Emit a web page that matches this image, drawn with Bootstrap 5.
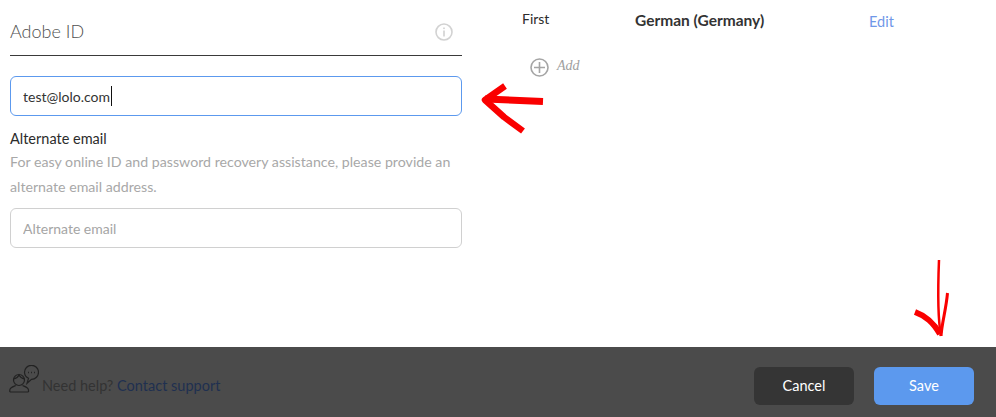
<!DOCTYPE html>
<html lang="en">
<head>
    <meta charset="UTF-8">
    <meta name="viewport" content="width=device-width, initial-scale=1.0">
    <link href="https://cdn.jsdelivr.net/npm/bootstrap@5.3.3/dist/css/bootstrap.min.css" rel="stylesheet">
    <script src="https://cdn.jsdelivr.net/npm/bootstrap@5.3.3/dist/js/bootstrap.bundle.min.js"></script>
    <title>Adobe ID</title>
    <style>
        html, body { height: 417px; overflow: hidden; }
        body { font-family: "Lato", "Liberation Sans", sans-serif; font-size: 14px; color: #2c2c2c; position: relative; }
        .page-main { height: 347px; padding-left: 10px; }
        .left-side { width: 452px; }
        .id-head { height: 56px; padding-top: 18px; border-bottom: 1px solid #3a3a3a; font-size: 18px; font-weight: 300; color: #505050; line-height: 26px; margin-bottom: 20px; }
        .info-icon { margin-top: 5px; margin-right: 9px; }
        .field-box { height: 40px; border-radius: 6px; padding: 0 12px; font-size: 14px; color: #333; border: 1px solid #d0d0d0; }
        .field-box::placeholder { color: #a5a5a5; opacity: 1; }
        .field-box.active-field, .field-box.active-field:focus { border-color: #5c99ee; box-shadow: none; }
        .caret-line { position: absolute; left: 101px; top: 10px; width: 1px; height: 20px; background: #111; }
        .alt-label { font-size: 14.5px; line-height: 20px; margin-top: 13px; color: #2c2c2c; }
        .help-text { line-height: 24.5px; color: #a8a8a8; font-size: 14.2px; margin: 1px 0 9px; }
        .right-side { margin-left: 60px; padding-top: 9px; line-height: 20px; }
        .col-first { width: 113px; }
        .col-lang { width: 234px; font-weight: 700; font-size: 15.5px; color: #333; padding-top: 1px; }
        .edit-link { color: #6f97e8; text-decoration: none; margin-top: 3px; font-size: 14.5px; }
        .add-row { margin: 26px 0 0 8px; }
        .add-text { font-family: "Liberation Serif", serif; font-style: italic; color: #a0a0a0; font-size: 14px; margin-top: -3px; }
        .page-foot { height: 70px; background: #4b4b4b; padding: 0 22px 0 9px; color: #333; }
        .foot-help { margin-top: 7px; font-size: 14.5px; margin-left: -1px; }
        .foot-help a { color: #1f3050; text-decoration: none; }
        .foot-icon { margin-bottom: 5px; }
        .foot-btn { width: 100px; height: 38px; border-radius: 6px; border: 0; font-size: 14.5px; color: #fff; margin-top: 8px; }
        .btn-cancel, .btn-cancel:hover { background: #353535; color: #fff; }
        .btn-save, .btn-save:hover { background: #5c99ee; color: #fff; }
        .scribbles { position: absolute; left: 0; top: 0; pointer-events: none; }
    </style>
</head>
<body>
    <div class="page-main d-flex">
        <div class="left-side">
            <div class="id-head d-flex justify-content-between">
                <span>Adobe ID</span>
                <svg class="info-icon" width="18" height="18" viewBox="0 0 18 18" fill="none">
                    <circle cx="9" cy="9" r="8" stroke="#d2d2d2" stroke-width="1.6"/>
                    <rect x="8.2" y="7.5" width="1.6" height="6" fill="#d2d2d2"/>
                    <rect x="8.2" y="4.500" width="1.6" height="1.6" fill="#d2d2d2"/>
                </svg>
            </div>
            <div class="position-relative">
                <input type="text" class="form-control field-box active-field" value="test@lolo.com">
                <span class="caret-line"></span>
            </div>
            <div class="alt-label">Alternate email</div>
            <p class="help-text">For easy online ID and password recovery assistance, please provide an alternate email address.</p>
            <input type="text" class="form-control field-box" placeholder="Alternate email">
        </div>
        <div class="right-side">
            <div class="d-flex">
                <div class="col-first">First</div>
                <div class="col-lang">German (Germany)</div>
                <a href="#" class="edit-link">Edit</a>
            </div>
            <div class="add-row d-flex align-items-center gap-2">
                <svg width="19" height="19" viewBox="0 0 19 19" fill="none" stroke="#a5a5a5" stroke-width="1.6">
                    <circle cx="9.5" cy="9.5" r="8.5"/>
                    <path d="M9.5 4v11M4 9.5h11"/>
                </svg>
                <span class="add-text">Add</span>
            </div>
        </div>
    </div>
    <div class="page-foot d-flex align-items-center justify-content-between">
        <div class="d-flex align-items-center gap-1">
            <svg class="foot-icon" width="30" height="30" viewBox="0 0 30 30" fill="none" stroke="#222" stroke-width="1.2">
                <circle cx="10" cy="15" r="5.500"/>
                <path d="M4.500 14c3-.5 4.500-2 5.500-4 1 2 3 3.500 5.500 4"/>
                <path d="M.8 27v-2c0-2.500 3.500-3.500 6-4.500M19.500 27v-2c0-2.500-3.500-3.500-6-4.500M.8 27h18.700"/>
                <path d="M15.500 7.500a7 7 0 1 1 7 6.800l-4.500 4 1.500-5a7 7 0 0 1-4-5.800z"/>
                <path d="M19 7.500h.9M22 7.500h.9M25 7.500h.9" stroke-width="1.400"/>
            </svg>
            <div class="foot-help">Need help? <a href="#">Contact support</a></div>
        </div>
        <div class="d-flex gap-3">
            <button type="button" class="btn foot-btn btn-cancel me-1">Cancel</button>
            <button type="button" class="btn foot-btn btn-save">Save</button>
        </div>
    </div>
    <svg class="scribbles" width="996" height="417" viewBox="0 0 996 417" fill="none" stroke="#fa0000" stroke-linejoin="round">
        <path d="M543 101.500 L485 99" stroke-width="7"/>
        <path d="M505 86 L485 100 L504 117 L523 131" stroke-width="6.500"/>
        <path d="M939 260 C938 285 937 315 941 336" stroke-width="2.500"/>
        <path d="M947.500 293 C946 310 942 322 941 336" stroke-width="3"/>
        <path d="M915 312 C926 316 933 322 940 334" stroke-width="6"/>
    </svg>
</body>
</html>
